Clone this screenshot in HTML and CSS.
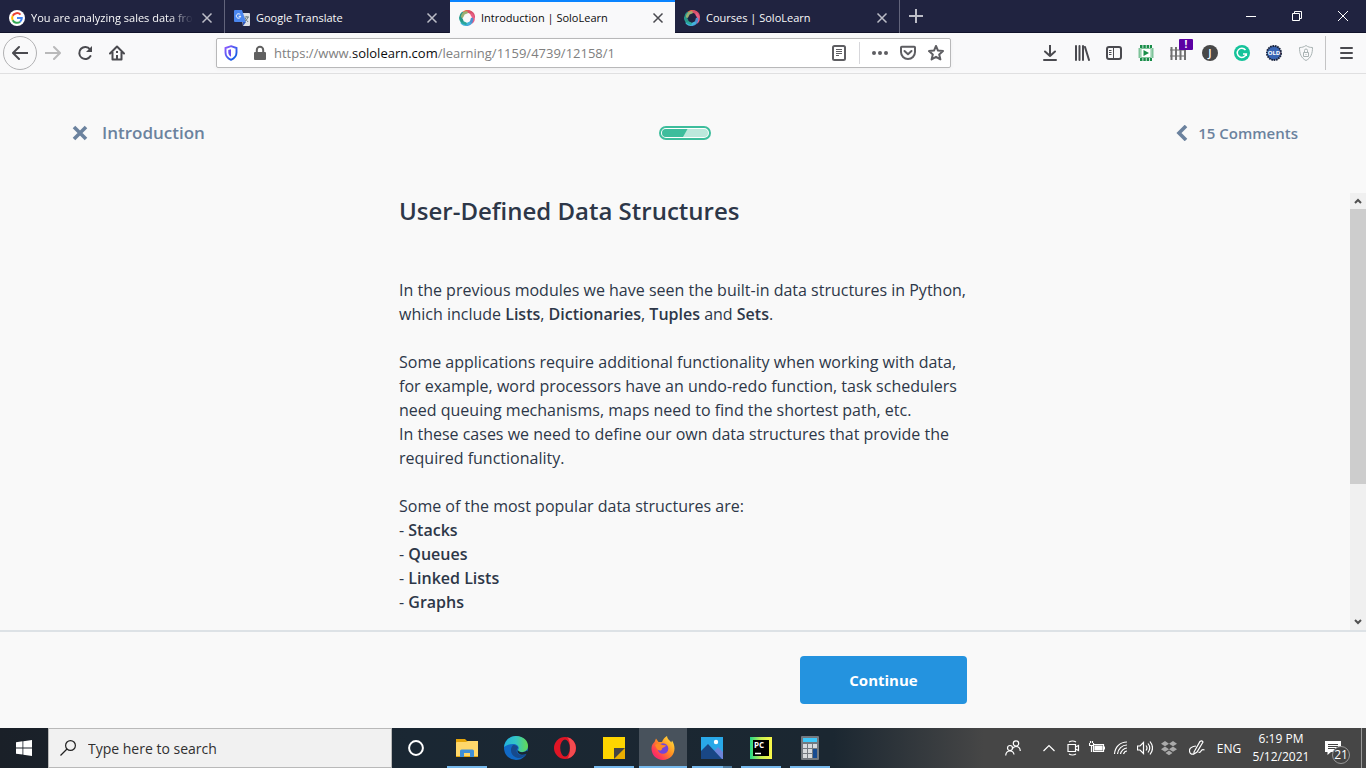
FILE: index.html
```html
<!DOCTYPE html>
<html lang="en">
<head>
<meta charset="utf-8">
<title>Introduction | SoloLearn</title>
<link rel="stylesheet" href="styles.css">
</head>
<body>
<svg class="defs" aria-hidden="true">
  <symbol id="cross" viewBox="0 0 12 12"><path d="M1.500 1.500l9 9m0-9l-9 9" fill="none" stroke="currentColor" stroke-width="1.500"/></symbol>
  <symbol id="swirl" viewBox="0 0 16 16">
    <g fill="none" stroke-width="2.700" stroke-linecap="round">
      <path d="M4.500 2.800Q8-.2 12 2.600" stroke="#e8694a"/>
      <path d="M9.500 1.600Q14.500 2.400 14.700 7" stroke="#d9506c"/>
      <path d="M12.700 4.500Q16 8.500 13.200 12" stroke="#e85e86"/>
      <path d="M13 9Q12.500 14 8 14.700" stroke="#4f8fd0"/>
      <path d="M10.500 13.200Q6 16 3 13" stroke="#42b4dc"/>
      <path d="M6.500 13.500Q1.500 12 1.400 8" stroke="#2aa79b"/>
      <path d="M3 10.500Q.2 6 3.500 3.200" stroke="#279688"/>
      <path d="M3.200 6.500Q4.200 2.500 7.500 2.500" stroke="#9aaf73"/>
    </g>
  </symbol>
</svg>

<header class="tabs">
  <div class="tab">
    <svg class="favicon" viewBox="0 0 16 16"><circle cx="8" cy="8" r="8" fill="#fff"/><g fill="none" stroke-width="2"><path d="M11.500 4.600A4.800 4.800 0 0 0 3.700 5.800" stroke="#ea4335"/><path d="M3.700 5.800a4.800 4.800 0 0 0 0 4.400" stroke="#fbbc05"/><path d="M3.700 10.200a4.800 4.800 0 0 0 7.400 1.500" stroke="#34a853"/><path d="M11.100 11.700A4.800 4.800 0 0 0 12.800 8H8" stroke="#4285f4"/></g></svg>
    <span class="tab-title fade">You are analyzing sales data from</span>
    <button class="tab-close" aria-label="Close tab"><svg viewBox="0 0 12 12"><use href="#cross"/></svg></button>
  </div>
  <div class="tab">
    <svg class="favicon" viewBox="0 0 16 16"><path d="M7 3h8a1 1 0 0 1 1 1v11a1 1 0 0 1-1 1H9z" fill="#dcdfe3"/><path d="M1 0h7l4 12H1a1 1 0 0 1-1-1V1a1 1 0 0 1 1-1z" fill="#4a86ee"/><path d="M9 12h3l-3 4z" fill="#3157b5"/><path d="M6.300 4.700A2.200 2.200 0 1 0 6.700 6.300H4.700" fill="none" stroke="#fff"/><path d="M10.500 7H15m-2.200-1v1m1.200 0q-.8 3-3 4m.2-3q1 2.500 3 4" fill="none" stroke="#6b7c80"/></svg>
    <span class="tab-title">Google Translate</span>
    <button class="tab-close" aria-label="Close tab"><svg viewBox="0 0 12 12"><use href="#cross"/></svg></button>
  </div>
  <div class="tab active">
    <svg class="favicon"><use href="#swirl"/></svg>
    <span class="tab-title">Introduction | SoloLearn</span>
    <button class="tab-close" aria-label="Close tab"><svg viewBox="0 0 12 12"><use href="#cross"/></svg></button>
  </div>
  <div class="tab">
    <svg class="favicon"><use href="#swirl"/></svg>
    <span class="tab-title">Courses | SoloLearn</span>
    <button class="tab-close" aria-label="Close tab"><svg viewBox="0 0 12 12"><use href="#cross"/></svg></button>
  </div>
  <button class="new-tab" aria-label="New tab"><svg viewBox="0 0 16 16"><path d="M8 1v14M1 8h14" stroke="currentColor" stroke-width="2"/></svg></button>
  <div class="window-controls">
    <button aria-label="Minimize"><svg viewBox="0 0 12 12"><path d="M1 6.500h10" stroke="#fff"/></svg></button>
    <button aria-label="Restore"><svg viewBox="0 0 12 12" fill="none" stroke="#fff"><path d="M1.500 3.500h7v7h-7zM3.500 3.500v-2h7v7h-2"/></svg></button>
    <button aria-label="Close"><svg viewBox="0 0 12 12"><path d="M1 1l10 10M11 1L1 11" stroke="#fff"/></svg></button>
  </div>
</header>

<nav class="toolbar">
  <div class="nav-buttons">
    <button class="back" aria-label="Back"><svg viewBox="0 0 16 16"><path d="M15.500 8H1.500M7 2L1 8l6 6" class="line"/></svg></button>
    <button class="dim" aria-label="Forward"><svg viewBox="0 0 16 16"><path d="M.5 8h14M9 2l6 6-6 6" class="line"/></svg></button>
    <button aria-label="Reload"><svg viewBox="0 0 16 16"><path d="M13 4.300A6 6 0 1 0 13.500 11" class="line"/><path d="M15 1v6H9z" fill="currentColor"/></svg></button>
    <button aria-label="Home"><svg viewBox="0 0 16 16"><path d="M1 8.500l7-7 7 7M3.500 7v7.500h9V7" class="line"/><path d="M7 15v-5h2v5zM7 6h2v2H7z" fill="currentColor"/></svg></button>
  </div>
  <div class="urlbar">
    <svg class="shield" viewBox="0 0 16 16"><defs><linearGradient id="sh" x2="1" y2="1"><stop stop-color="#9059ff"/><stop offset="1" stop-color="#0060df"/></linearGradient></defs><path d="M8 1.200L13.500 3v4.500c0 3.500-2.500 6-5.500 7.300C5 13.500 2.500 11 2.500 7.500V3z" fill="none" stroke="url(#sh)" stroke-width="1.900"/><path d="M8 4.200v7.500c-1.500-1-2.700-2.500-2.700-4.500V5z" fill="#6a4df0"/></svg>
    <svg class="lock" viewBox="0 0 16 16"><rect x="2" y="7" width="12" height="8" rx="1" fill="#606060"/><path d="M4.800 8V5a3.200 3.200 0 0 1 6.400 0v3" fill="none" stroke="#606060" stroke-width="2"/></svg>
    <p class="url">https://www.<b>sololearn.com</b>/learning/1159/4739/12158/1</p>
    <button class="reader" aria-label="Reader view"><svg viewBox="0 0 16 16"><rect x="2" y="1" width="12" height="14" rx="1.500" class="line"/><path d="M5 4.500h6M5 6.500h6M5 8.500h6M5 10.500h3" stroke="currentColor"/></svg></button>
    <span class="divider"></span>
    <button aria-label="Page actions"><svg viewBox="0 0 16 16" fill="currentColor"><circle cx="2" cy="8" r="2"/><circle cx="8" cy="8" r="2"/><circle cx="14" cy="8" r="2"/></svg></button>
    <button aria-label="Save to Pocket"><svg viewBox="0 0 16 16"><path d="M1 2.500q0-.8.800-.8h12.400q.8 0 .8.800V7a7 7 0 0 1-14 0zM4.500 6L8 9.300 11.500 6" class="line"/></svg></button>
    <button aria-label="Bookmark"><svg viewBox="0 0 16 16"><path d="M8 1l2 4.600 5 .5-3.800 3.300 1.200 5L8 11.800l-4.400 2.600 1.200-5L1 6.100l5-.5z" class="line"/></svg></button>
  </div>
  <div class="tools">
    <button aria-label="Downloads"><svg viewBox="0 0 16 16"><path d="M8 0v11M3 6.500L8 11l5-4.500M2 15h12" class="line"/></svg></button>
    <button aria-label="Library"><svg viewBox="0 0 16 16"><path d="M2 1v14M5.500 1v14M9 1v14M11 2l4 13" class="line"/></svg></button>
    <button aria-label="Sidebars"><svg viewBox="0 0 16 16"><rect x="1" y="2" width="14" height="12" rx="2" class="line"/><path d="M7.500 2v12M3 5.500h2.500M3 7.500h2.500M3 9.500h2.500" stroke="currentColor"/></svg></button>
    <button aria-label="Video downloader"><svg viewBox="0 0 16 16"><path d="M2 1.500h12M2 14.500h12" stroke="#188d48" stroke-width="3" stroke-dasharray="2.500 .8"/><path d="M1.500 3v10M14.500 3v10" stroke="#7fc49a" stroke-width="2"/><path d="M3 3.500h10v9H3z" fill="#fff" stroke="#7fc49a"/><path d="M5.500 5v6l5.500-3z" fill="#188d48"/></svg></button>
    <button class="fence" aria-label="Fence"><svg viewBox="0 0 16 16"><path d="M0 5h16M0 11h16" stroke="#999" stroke-width="1.500"/><path d="M1.500 2v13M6 2v13M10.500 2v13M15 2v13" stroke="#707070" stroke-width="2"/></svg><span class="alert">!</span></button>
    <button aria-label="Account J"><span class="letter">J</span></button>
    <button aria-label="Grammarly"><svg viewBox="0 0 16 16"><circle cx="8" cy="8" r="8" fill="#15c39a"/><path d="M11.500 5A4.600 4.600 0 1 0 12.300 9H9M12.300 8.500V11" fill="none" stroke="#fff" stroke-width="1.500"/></svg></button>
    <button aria-label="Old layout"><svg viewBox="0 0 16 16"><circle cx="8" cy="8" r="7" fill="#345aa5" stroke="#18233d" stroke-width="2" stroke-dasharray="1.700 .7"/><circle cx="8" cy="8" r="6" fill="#3866b5"/><text x="8" y="10" text-anchor="middle" class="old">OLD</text></svg></button>
    <button aria-label="Privacy"><svg viewBox="0 0 16 16" fill="none" stroke="#a9b3b3"><path d="M8 .5C6 2 4 2.500 1.500 2.500c0 6 1.500 10.500 6.500 13 5-2.500 6.500-7 6.500-13C12 2.500 10 2 8 .5z"/><path d="M5.500 7.500h5v4h-5zM6.500 7V5.500a1.500 1.500 0 0 1 3 0V7M8 9v1"/></svg></button>
  </div>
  <button class="menu" aria-label="Menu"><svg viewBox="0 0 16 16"><path d="M3 3h11M3 8h11M3 13h11" class="line"/></svg></button>
</nav>

<main class="lesson">
  <div class="lesson-bar">
    <button class="crumb"><svg viewBox="0 0 16 16"><path d="M2 2l12 12M14 2L2 14" fill="none" stroke="currentColor" stroke-width="3.600"/></svg><span>Introduction</span></button>
    <svg class="progress" viewBox="0 0 52 14" role="img" aria-label="Progress 50%"><rect x="1" y="1" width="50" height="12" rx="6" fill="#fff" stroke="#3dbd9c" stroke-width="2"/><rect x="3" y="3" width="46" height="8" rx="4" fill="#bce8dc"/><path d="M7 3h21.500L24 11H7a4 4 0 0 1 0-8z" fill="#3dbd9c"/></svg>
    <button class="comments"><svg viewBox="0 0 12 16"><path d="M10 1L3 8l7 7" fill="none" stroke="currentColor" stroke-width="3.600"/></svg><span>15 Comments</span></button>
  </div>
  <div class="reading">
    <article class="article">
      <h1>User-Defined Data Structures</h1>
      <p>In the previous modules we have seen the built-in data structures in Python, which include <b>Lists</b>, <b>Dictionaries</b>, <b>Tuples</b> and <b>Sets</b>.</p>
      <p>Some applications require additional functionality when working with data, for example, word processors have an undo-redo function, task schedulers need queuing mechanisms, maps need to find the shortest path, etc.<br>In these cases we need to define our own data structures that provide the required functionality.</p>
      <p>Some of the most popular data structures are:<br>- <b>Stacks</b><br>- <b>Queues</b><br>- <b>Linked Lists</b><br>- <b>Graphs</b></p>
    </article>
    <div class="scrollbar" aria-hidden="true">
      <svg viewBox="0 0 16 16"><path d="M5 10l3-3 3 3" fill="none" stroke="#505050" stroke-width="2"/></svg>
      <div class="track"><div class="thumb"></div></div>
      <svg viewBox="0 0 16 16"><path d="M5 6l3 3 3-3" fill="none" stroke="#505050" stroke-width="2"/></svg>
    </div>
  </div>
  <div class="actions"><div class="actions-inner"><button class="continue">Continue</button></div></div>
</main>

<footer class="taskbar">
  <button class="start" aria-label="Start"><svg viewBox="0 0 16 16" fill="#fff"><path d="M0 2.200l6.500-.9v6.200H0zM7.300 1.200L16 0v7.500H7.300zM0 8.400h6.500v6.200L0 13.700zM7.300 8.400H16V16l-8.700-1.200z"/></svg></button>
  <label class="search"><svg viewBox="0 0 16 16"><circle cx="10.500" cy="5.500" r="4.900" fill="none" stroke="#222" stroke-width="1.200"/><path d="M7 9L.5 15.500" stroke="#222" stroke-width="1.300"/></svg><input type="text" placeholder="Type here to search" aria-label="Type here to search"></label>
  <div class="apps">
    <button class="cortana" aria-label="Cortana"><svg viewBox="0 0 24 24"><circle cx="12" cy="12" r="6.900" fill="none" stroke="#fff" stroke-width="2"/></svg></button>
    <button class="open" aria-label="File Explorer"><svg viewBox="0 0 24 24"><path d="M1 3h9l2 2h11v16H1z" fill="#e5a50a"/><path d="M1 7q0-1 1-1h9l2-1h10v15H1z" fill="#ffd76a"/><path d="M5 21v-6q0-1.500 1.500-1.500h11q1.500 0 1.500 1.500v6h-4v-4H9v4z" fill="#3f8fd8"/></svg></button>
    <button aria-label="Edge"><svg viewBox="0 0 24 24"><defs><linearGradient id="ed"><stop stop-color="#22b2dc"/><stop offset=".5" stop-color="#34c6c5"/><stop offset="1" stop-color="#65db52"/></linearGradient></defs><circle cx="12" cy="12" r="12" fill="#1169c5"/><path d="M0 11C1 4 6 0 12 0c8 0 12 5.500 12 10 0 4-3 6-6.500 6-2.500 0-4-1-3.500-2 2-3-.5-6-5-6-4 0-7 1.500-9 3z" fill="url(#ed)"/><path d="M9 9c-4 4-2 12 5 13 3 .4 6-1 8-3.500C15 21 10 16 14 11.500 13 9.500 11 9 9 9z" fill="#174a8c"/><path d="M22.500 18c-2 .8-4 1.200-6 .5-3-1-3.500-3.500-2.500-4.500.5 2.500 6 3 9 .5 1.500 1 1 2.500-.5 3.500z" fill="#1a2733"/></svg></button>
    <button aria-label="Opera"><svg viewBox="0 0 24 24"><ellipse cx="12" cy="12" rx="11" ry="11" fill="#e01525"/><path d="M14 1.200A11 11 0 0 1 14 22.800c4-3 4-19 0-21.600z" fill="#f34b50"/><ellipse cx="12" cy="12" rx="4.800" ry="8.600" fill="#1a2733"/></svg></button>
    <button class="open" aria-label="Sticky Notes"><svg viewBox="0 0 24 24"><path d="M1 1h22v22H1z" fill="#fed500"/><path d="M23 12v11H12z" fill="#eaae00"/><path d="M12 12h11L12 23z" fill="#444"/></svg></button>
    <button class="open current" aria-label="Firefox"><svg viewBox="0 0 24 24"><defs><linearGradient id="fx" x1="1" x2="0" y2="1"><stop stop-color="#fff044"/><stop offset=".45" stop-color="#ff9020"/><stop offset=".75" stop-color="#ff3858"/><stop offset="1" stop-color="#e5158c"/></linearGradient></defs><path d="M5 2.500L7.500 6 11 6c1-3 3-5 5-6 .2 3 2 3.500 3.500 5.500l.8 1 .7-2c1.500 2 2.500 5 2.500 8C23.500 19 18.500 24 12 24S.5 19 .5 12.500C.5 9 2 7.500 3.500 6z" fill="url(#fx)"/><circle cx="12" cy="12.500" r="5.300" fill="#7544d8"/><path d="M4 9c3-2.500 6-1 7.500 0l4 .5c-2 2-3.500 1.500-4.500 3 0 1.500-1 2-2 2C6 14.500 5 11 4 9z" fill="#ff8a25"/></svg></button>
    <button class="open split" aria-label="Photos"><svg viewBox="0 0 24 24"><path d="M1 1h22v22H1z" fill="#29a8e8"/><path d="M12 17l6-6 5 5v7H12z" fill="#6d84d8"/><path d="M1 15l7-7 14 15H1z" fill="#194785"/><circle cx="16" cy="6" r="2.200" fill="#fff"/></svg></button>
    <button class="open" aria-label="PyCharm"><svg viewBox="0 0 24 24"><defs><linearGradient id="pc" x2="1"><stop stop-color="#21d789"/><stop offset=".5" stop-color="#c6ef50"/><stop offset="1" stop-color="#fcf84a"/></linearGradient></defs><path d="M1 1h22v22H1z" fill="url(#pc)"/><path d="M4 4h16v16H4z" fill="#000"/><text x="5" y="12" class="pc">PC</text><path d="M6 17.500h6" stroke="#fff" stroke-width="1.500"/></svg></button>
    <button class="open" aria-label="Calculator"><svg viewBox="0 0 24 24"><rect x="3" width="18" height="24" rx="1" fill="#737980"/><path d="M5 2h14v4H5z" fill="#3fc8fa"/><path d="M5 8h4v4H5zM10 8h4v4h-4zM15 8h4v4h-4zM5 13h4v4H5zM10 13h4v4h-4zM5 18h4v4H5zM10 18h4v4h-4z" fill="#d7dade"/><path d="M15 13h4v9h-4z" fill="#174b91"/></svg></button>
  </div>
  <div class="tray">
    <button class="people" aria-label="People"><svg viewBox="0 0 16 16"><circle cx="5" cy="8" r="2.500"/><path d="M.7 15.500Q1 11 5 11q3.500 0 4 3.500"/><circle cx="11" cy="3.500" r="2.700"/><path d="M7.500 8.500Q9 6.500 11 6.500q4 0 4.300 4.500"/></svg></button>
    <button aria-label="Show hidden icons"><svg viewBox="0 0 16 16"><path d="M2.500 11L8 5.500 13.500 11"/></svg></button>
    <button aria-label="Meet now"><svg viewBox="0 0 16 16"><path d="M3 4.500h7.500v7H3zM10.500 7l3-1.500v5l-3-1.500M4 2q3.500-2 7 0M4 14q3.500 2 7 0"/></svg></button>
    <button aria-label="Battery"><svg viewBox="0 0 16 16"><path d="M4.500 4.500h10v7H4.500zM15.500 6.500v3M.5 3v2.500h4V3M1.500 1v2M3.500 1v2M2.500 6v6"/><path d="M6 6h7v4H6z" fill="#fff"/></svg></button>
    <button aria-label="Network"><svg viewBox="0 0 16 16"><path d="M1.500 14C2 7 7 2 14 2M4.500 14C5 9 9 5 14 5M7.500 14c.5-3 3.500-6 6.500-6M10.500 14c.5-1.500 2-3 3.500-3"/></svg></button>
    <button aria-label="Volume"><svg viewBox="0 0 16 16"><path d="M.5 6H3l3.500-3.500v11L3 10H.5zM9 5.500q2 2.500 0 5M11 3.500q3.500 4.500 0 9M13 1.500q5 6.500 0 13"/></svg></button>
    <button aria-label="Dropbox"><svg viewBox="0 0 16 16"><path d="M4 1l4 2.700-4 2.600L0 3.700zM12 1l4 2.700-4 2.600-4-2.600zM4 6.500l4 2.700-4 2.600L0 9.200zM12 6.500l4 2.700-4 2.600-4-2.600zM8 10.500l3.500 2.400L8 15.200l-3.500-2.300z" fill="#aaa" stroke="none"/></svg></button>
    <button class="pen" aria-label="Windows Ink"><svg viewBox="0 0 16 16"><path d="M5 12l6-10.500q2-1.500 3 .5L8 12l-3 2zM7 6Q0 7 .5 11t4.500 3M9.500 12q1.500 1 2.500-1t3.500-1"/></svg></button>
    <span class="lang">ENG</span>
    <p class="clock">6:19 PM<br>5/12/2021</p>
    <button class="notifications" aria-label="21 notifications"><svg viewBox="0 0 16 16"><path d="M0 1h16v11H6l-3.500 3v-3H0z" fill="#fff" stroke="none"/><path d="M3 4.500h10M3 6.500h10M3 8.500h7" stroke="#444"/></svg><span class="count">21</span></button>
  </div>
</footer>
</body>
</html>
```
FILE: styles.css
```css
* { box-sizing: border-box; }
body {
  margin: 0;
  height: 100vh;
  display: flex;
  flex-direction: column;
  overflow: hidden;
  background: #f9f9f9;
  color: #2d3748;
  font-family: "Open Sans", "Noto Sans", sans-serif;
}
button { border: 0; padding: 0; background: none; color: inherit; font: inherit; display: flex; align-items: center; justify-content: center; }
p, h1 { margin: 0; }
svg { width: 16px; height: 16px; flex: none; display: block; }
.defs { position: absolute; width: 0; height: 0; }
.line { fill: none; stroke: currentColor; stroke-width: 2; stroke-linejoin: round; stroke-linecap: round; }

/* Tab strip */
.tabs { flex: none; height: 33px; display: flex; background: #202340; color: #f9f9fa; border-bottom: 1px solid #11132b; }
.tab { flex: 0 1 225px; min-width: 0; height: 33px; display: flex; align-items: center; gap: 6px; padding: 2px 9px 0; border-right: 1px solid #62647b; }
.tab.active { background: #f9f9fa; color: #0c0c0d; border-top: 2px solid #0a84ff; border-right: 0; padding-top: 0; }
.tab:has(+ .active) { border-right-color: #202340; }
.tab-title { flex: 1; min-width: 0; font-size: 11px; white-space: nowrap; overflow: hidden; }
.fade { mask-image: linear-gradient(to right, #000 85%, transparent); }
.tab-close { width: 16px; height: 16px; color: #bcbdc7; }
.active .tab-close { color: #4a4a4f; }
.tab-close svg { width: 12px; height: 12px; }
.new-tab { width: 32px; color: #bcbdc7; }
.window-controls { display: flex; margin-left: auto; }
.window-controls button { width: 46px; }
.window-controls svg { width: 12px; height: 12px; }

/* Navigation toolbar */
.toolbar { flex: none; height: 41px; display: flex; align-items: center; background: #f9f9fa; border-bottom: 1px solid #e0e0e1; color: #4a4a4f; }
.nav-buttons { flex: none; display: flex; align-items: center; padding-left: 3px; width: 216px; }
.nav-buttons button { width: 32px; height: 32px; }
.nav-buttons .back { width: 34px; height: 34px; border: 1px solid #b1b1b3; border-radius: 50%; }
.nav-buttons .dim { color: #b9b9ba; }
.urlbar { flex: 1; height: 30px; display: flex; align-items: center; background: #fff; border: 1px solid #b8b8b9; border-radius: 2px; box-shadow: 0 1px 4px #0000000d; padding: 0 0 0 6px; color: #5e5e62; }
.urlbar button { width: 28px; height: 28px; }
.urlbar .reader { width: 24px; margin-right: 8px; }
.lock { margin: 0 6px 0 13px; }
.url { flex: 1; min-width: 0; white-space: nowrap; font-size: 13px; color: #808080; }
.url b { font-weight: 400; color: #0c0c0d; }
.divider { width: 1px; height: 22px; background: #d7d7db; margin-right: 6px; }
.tools { flex: none; display: flex; margin-left: 83px; }
.tools button { width: 32px; height: 32px; }
.fence { position: relative; }
.alert { position: absolute; left: 17px; top: 2px; width: 14px; height: 11px; background: #5b00a3; color: #fff; font: bold 10px/11px "Open Sans", sans-serif; text-align: center; border-radius: 1px; }
.letter { width: 16px; height: 16px; border-radius: 50%; background: #484848; color: #fff; font: 600 11px/16px "Open Sans", sans-serif; }
.old { font: bold 6px "Open Sans", sans-serif; fill: #fff; }
.menu { flex: none; width: 41px; height: 34px; border-left: 1px solid #c4c4c5; margin-left: 3px; }

/* Lesson */
.lesson { flex: 1; min-height: 0; display: flex; flex-direction: column; }
.lesson-bar { flex: none; height: 119px; display: grid; grid-template-columns: 1fr auto 1fr; align-items: center; padding: 0 68px 2px 72px; color: #6b829e; font-weight: 600; }
.crumb { justify-self: start; gap: 14px; font-size: 17px; }
.progress { width: 52px; height: 14px; }
.comments { justify-self: end; gap: 10px; font-size: 15px; }
.comments svg { width: 12px; }
.reading { flex: 1; min-height: 0; display: flex; padding-left: 16px; }
.article { width: 568px; margin: 0 auto; font-size: 16px; line-height: 24px; }
.article h1 { font-size: 24px; font-weight: 600; line-height: 36px; margin-bottom: 49px; }
.article p { margin-bottom: 24px; }
.article b { font-weight: 600; }
.scrollbar { flex: none; width: 16px; display: flex; flex-direction: column; background: #f0f0f0; }
.track { flex: 1; }
.thumb { height: 68%; background: #cdcdcd; }
.actions { flex: none; border-top: 2px solid #dde2e6; padding: 24px 0; }
.actions-inner { width: 568px; margin: 0 auto; display: flex; justify-content: flex-end; }
.continue { width: 167px; height: 48px; border-radius: 4px; background: #2493df; color: #fff; font-size: 15px; font-weight: 700; }

/* Taskbar */
.taskbar { flex: none; height: 40px; display: flex; background: linear-gradient(to right, #1a2028, #1a2733 30%, #1b2731 61%, #464646 72%); color: #fff; }
.start { width: 48px; }
.search { flex: 0 1 344px; display: flex; align-items: center; gap: 12px; padding: 0 11px; background: #f1f1f1; border: 1px solid #b9b9b9; }
.search input { flex: 1; min-width: 0; border: 0; padding: 0; background: none; outline: 0; font: 14px "Open Sans", sans-serif; }
.search input::placeholder { color: #303030; opacity: 1; }
.apps { display: flex; gap: 1px; }
.apps button { width: 48px; position: relative; }
.apps .cortana { margin-right: 2px; }
.apps svg { width: 24px; height: 24px; }
.open::after { content: ""; position: absolute; left: 4px; right: 4px; bottom: 0; height: 2px; background: #76b9ed; }
.current { background: #48525c; }
.apps .current::after { left: 0; right: 0; }
.split::after { background: linear-gradient(to right, #76b9ed 31px, #4f7da1 31px); }
.pc { font: bold 8px "Open Sans", sans-serif; fill: #fff; }
.tray { display: flex; align-items: center; margin-left: auto; height: 40px; padding-right: 4px; font-size: 12px; }
.tray button { width: 24px; height: 40px; }
.tray svg { fill: none; stroke: #fff; stroke-width: 1.200px; }
.tray .people { margin-right: 12px; }
.tray .pen { margin-left: 4px; }
.lang { width: 40px; text-align: center; }
.clock { width: 64px; line-height: 18px; text-align: center; }
.tray .notifications { width: 49px; border-right: 1px solid #999; position: relative; }
.tray .notifications svg { margin-right: 8px; }
.count { position: absolute; left: 19px; top: 18px; width: 18px; height: 18px; border: 1px solid #999; border-radius: 50%; background: #444; font-size: 12px; line-height: 16px; }
```
